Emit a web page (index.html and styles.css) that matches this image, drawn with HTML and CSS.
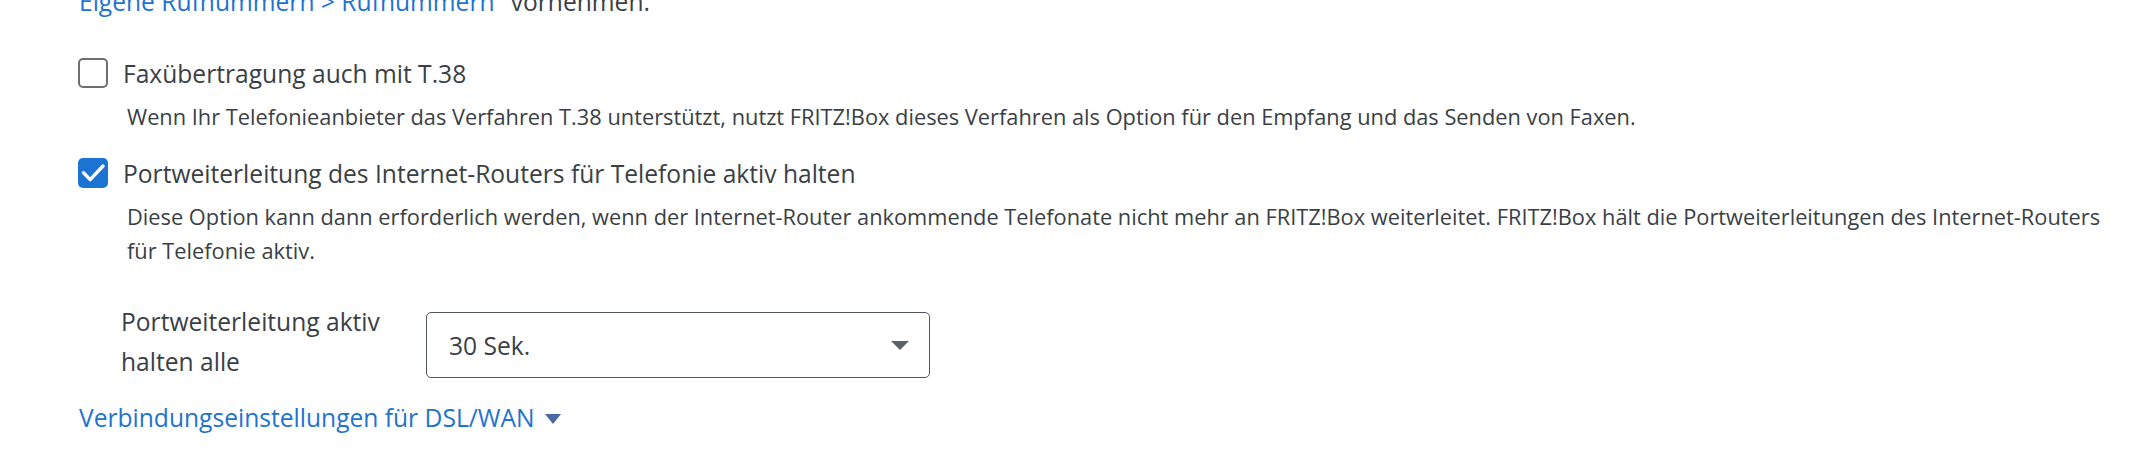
FILE: index.html
```html
<!DOCTYPE html>
<html lang="de">
<head>
<meta charset="utf-8">
<title>Telefonie</title>
<link rel="stylesheet" href="styles.css">
</head>
<body>
<main class="page">
  <p class="intro"><a class="link" href="#">Eigene Rufnummern &gt; Rufnummern</a>" vornehmen.</p>

  <div class="option">
    <label class="check-row">
      <span class="box"></span>
      <span class="check-label">Faxübertragung auch mit T.38</span>
    </label>
    <p class="desc">Wenn Ihr Telefonieanbieter das Verfahren T.38 unterstützt, nutzt FRITZ!Box dieses Verfahren als Option für den Empfang und das Senden von Faxen.</p>
  </div>

  <div class="option">
    <label class="check-row">
      <span class="box checked"><svg viewBox="0 0 30 30" width="30" height="30"><polyline points="5.5,14.8 12.2,21.6 25,8" fill="none" stroke="#fff" stroke-width="3.4" stroke-linecap="round" stroke-linejoin="round"/></svg></span>
      <span class="check-label">Portweiterleitung des Internet-Routers für Telefonie aktiv halten</span>
    </label>
    <p class="desc">Diese Option kann dann erforderlich werden, wenn der Internet-Router ankommende Telefonate nicht mehr an FRITZ!Box weiterleitet. FRITZ!Box hält die Portweiterleitungen des Internet-Routers für Telefonie aktiv.</p>
  </div>

  <div class="field">
    <span class="field-label">Portweiterleitung aktiv halten alle</span>
    <div class="select">
      <span class="select-value">30 Sek.</span>
      <span class="select-arrow"></span>
    </div>
  </div>

  <a class="link toggle" href="#">Verbindungseinstellungen für DSL/WAN<span class="toggle-arrow"></span></a>
</main>
</body>
</html>
```
FILE: styles.css
```css
html, body {
  margin: 0;
  padding: 0;
  background: #ffffff;
}
body {
  font-family: "Open Sans", "Noto Sans", sans-serif;
  color: #3a3f46;
  overflow: hidden;
  height: 457px;
}
.page {
  padding: 0 8px 0 78px;
  display: flex;
  flex-direction: column;
  align-items: flex-start;
}
.intro {
  margin: -16px 0 0 1px;
  font-size: 24.6px;
  line-height: 36px;
  white-space: nowrap;
}
.link {
  color: #1f72cf;
  text-decoration: none;
}
.option {
  display: flex;
  flex-direction: column;
  margin-top: 35.5px;
}
.option + .option {
  margin-top: 22px;
}
.check-row {
  display: flex;
  align-items: center;
  gap: 15px;
  font-size: 24.6px;
  line-height: 36px;
}
.box {
  box-sizing: border-box;
  width: 30px;
  height: 30px;
  flex: 0 0 30px;
  border: 2.5px solid #6d6e70;
  border-radius: 5px;
  background: #fff;
  margin-top: -1px;
}
.box.checked {
  border: none;
  background: #1b74d2;
}
.box svg {
  display: block;
}
.desc {
  margin: 8px 0 0 49px;
  font-size: 21.8px;
  line-height: 34px;
  max-width: 1980px;
}
.field {
  display: flex;
  align-items: flex-start;
  margin: 34px 0 0 43px;
}
.field-label {
  width: 305px;
  flex: 0 0 305px;
  font-size: 24.6px;
  line-height: 40px;
}
.select {
  box-sizing: border-box;
  width: 504px;
  height: 66px;
  margin-top: 10.5px;
  border: 1.5px solid #50565c;
  border-radius: 5px;
  display: flex;
  align-items: center;
  justify-content: space-between;
  padding: 0 20px 0 22px;
  font-size: 24.6px;
  color: #3a3f46;
}
.select-arrow {
  width: 0;
  height: 0;
  border-left: 9px solid transparent;
  border-right: 9px solid transparent;
  border-top: 9px solid #5b6167;
  margin-top: 1px;
}
.toggle {
  margin: 18px 0 0 1px;
  font-size: 24.6px;
  line-height: 36px;
  display: flex;
  align-items: center;
}
.toggle-arrow {
  width: 0;
  height: 0;
  border-left: 8.5px solid transparent;
  border-right: 8.5px solid transparent;
  border-top: 10px solid #4a69a6;
  margin: 3px 0 0 10px;
}
```
